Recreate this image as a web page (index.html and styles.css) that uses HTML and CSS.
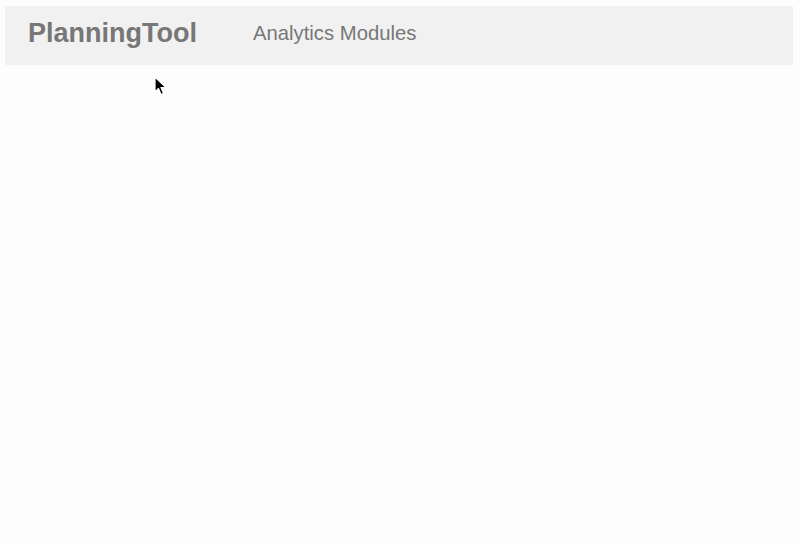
FILE: index.html
```html
<!DOCTYPE html>
<html>
<head>
<meta charset="utf-8">
<link rel="stylesheet" href="styles.css">
</head>
<body>
<nav class="navbar">
  <span class="brand">PlanningTool</span>
  <span class="link">Analytics Modules</span>
</nav>
<svg class="cursor" width="14" height="22" viewBox="0 0 14 22">
  <path d="M1 1 L1 16 L4.5 12.5 L7 18.5 L9.5 17.5 L7 11.5 L12 11.5 Z" fill="#000" stroke="#fff" stroke-width="1.2" stroke-linejoin="round"/>
</svg>
</body>
</html>
```
FILE: styles.css
```css
html, body {
  background: #fefdfe;
}
body {
  margin: 6px 7px 0 5px;
  font-family: "Liberation Sans", Arial, sans-serif;
  position: relative;
  height: 538px;
}
.navbar {
  display: flex;
  align-items: center;
  height: 59px;
  background: #f1f1f2;
  padding: 0 0 5px 23px;
  gap: 56px;
  box-sizing: border-box;
}
.brand {
  font-size: 27px;
  font-weight: bold;
  color: #777;
  line-height: 1;
}
.link {
  font-size: 20.3px;
  color: #777;
  line-height: 1;
}
.cursor {
  position: absolute;
  left: 149px;
  top: 70px;
}
```
